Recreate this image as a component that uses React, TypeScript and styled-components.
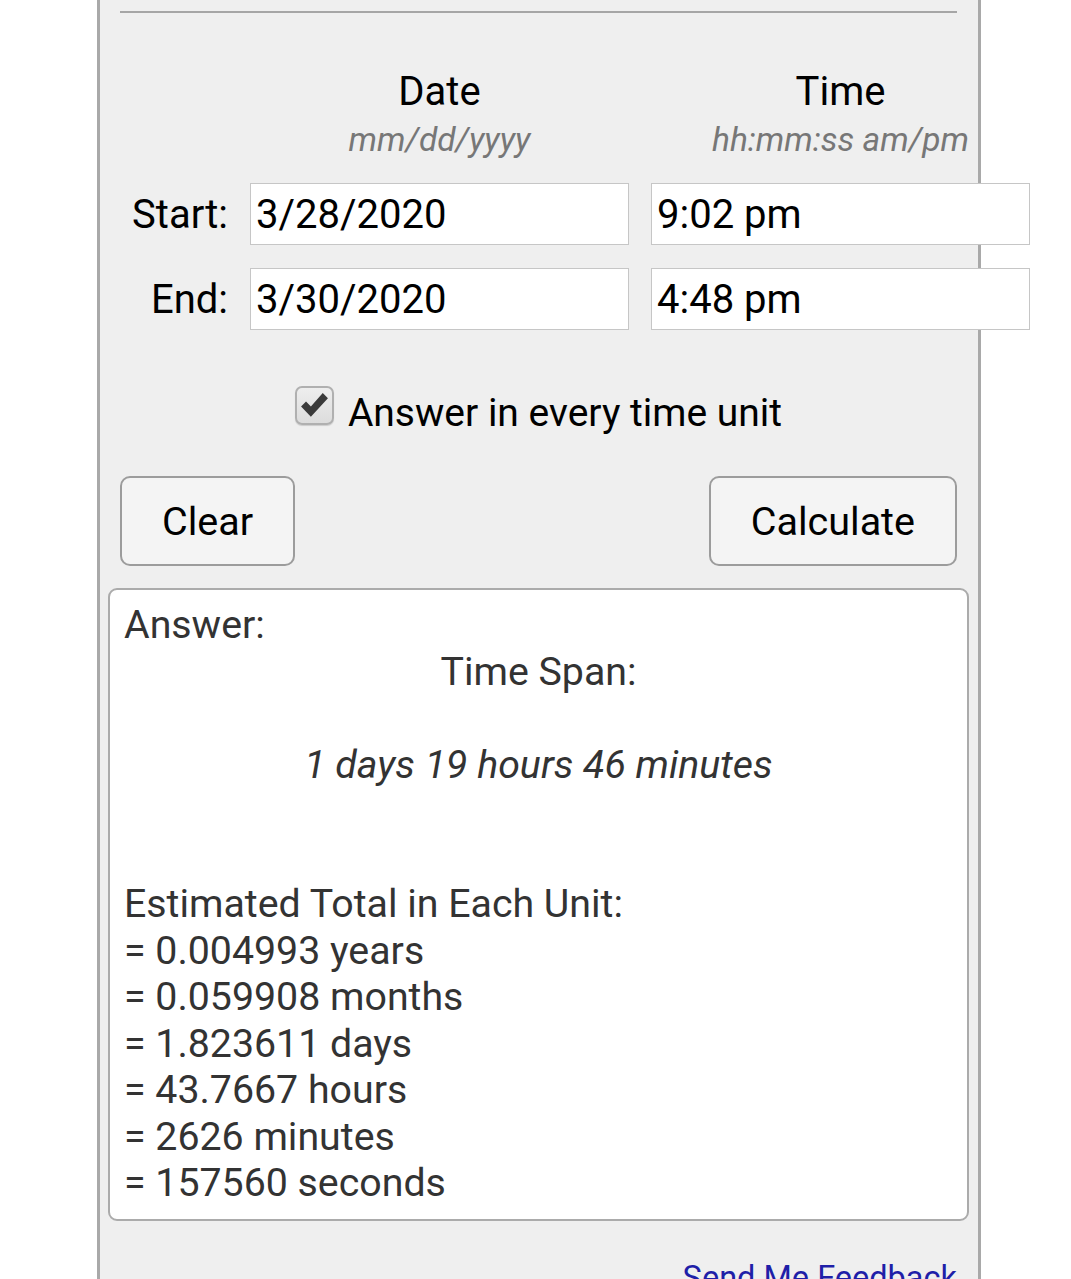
import React from "react";
import styled, { createGlobalStyle } from "styled-components";

const GlobalStyle = createGlobalStyle`
  html, body {
    margin: 0;
    padding: 0;
    background: #ffffff;
  }
  body {
    font-family: Roboto, "Noto Sans", "Liberation Sans", sans-serif;
    color: #000;
  }
`;

const Panel = styled.div`
  box-sizing: border-box;
  width: 884px;
  margin-left: 97px;
  min-height: 1279px;
  padding: 0 9px 0 8px;
  background: #efefef;
  border-left: 3px solid #a9a9a9;
  border-right: 3px solid #a9a9a9;
`;

const FormSection = styled.div`
  padding: 11px 12px 0;
`;

const Rule = styled.div`
  border-top: 2px solid #a6a6a6;
  margin-bottom: 56px;
`;

const FieldGrid = styled.div`
  display: grid;
  grid-template-columns: 108px 379px 379px;
  column-gap: 22px;
  align-items: center;
`;

const HeaderGrid = styled(FieldGrid)`
  margin-bottom: 24px;
  align-items: start;
`;

const ColumnHead = styled.div`
  text-align: center;
  white-space: nowrap;
`;

const HeadTitle = styled.div`
  font-size: 40px;
  line-height: 46px;
  margin-bottom: 6px;
`;

const HeadHint = styled.div`
  font-size: 33.5px;
  line-height: 38px;
  font-style: italic;
  color: #777;
`;

const InputRow = styled(FieldGrid)`
  margin-bottom: 23px;
`;

const RowLabel = styled.label`
  font-size: 40px;
  text-align: right;
`;

const TextInput = styled.input`
  box-sizing: border-box;
  width: 100%;
  height: 62px;
  margin: 0;
  padding: 0 5px;
  border: 1px solid #c6c6c6;
  border-radius: 0;
  background: #fff;
  font-family: Roboto, "Noto Sans", sans-serif;
  font-size: 40px;
  color: #000;
  outline: none;
`;

const CheckRow = styled.label`
  display: flex;
  justify-content: center;
  align-items: flex-start;
  gap: 14px;
  margin-top: 60px;
  font-size: 39px;
  line-height: 47px;
`;

const CheckBox = styled.span`
  box-sizing: border-box;
  display: flex;
  align-items: center;
  justify-content: center;
  width: 39px;
  height: 39px;
  margin-top: -4px;
  border: 2px solid #b0b0b0;
  border-radius: 7px;
  background: linear-gradient(#eeeeee, #dcdcdc);
  box-shadow: 0 1px 1px rgba(0, 0, 0, 0.15);
`;

const ButtonRow = styled.div`
  display: flex;
  justify-content: space-between;
  margin-top: 39px;
  margin-bottom: 22px;
`;

const ActionButton = styled.button`
  box-sizing: border-box;
  height: 90px;
  padding: 0 40px;
  border: 2px solid #9c9c9c;
  border-radius: 10px;
  background: #f4f4f4;
  font-family: Roboto, "Noto Sans", sans-serif;
  font-size: 39.5px;
  color: #000;
`;

const AnswerBox = styled.div`
  box-sizing: border-box;
  padding: 12px 14px 12px;
  background: #fff;
  border: 2px solid #ababab;
  border-radius: 9px;
  font-size: 39.3px;
  line-height: 46.5px;
  color: #333;
`;

const Line = styled.div<{ $center?: boolean; $italic?: boolean; $gap?: number }>`
  text-align: ${(p) => (p.$center ? "center" : "left")};
  font-style: ${(p) => (p.$italic ? "italic" : "normal")};
  margin-top: ${(p) => (p.$gap || 0) * 46.5}px;
  white-space: nowrap;
`;

const Footer = styled.div`
  display: flex;
  justify-content: flex-end;
  padding: 38px 12px 0;
`;

const FeedbackLink = styled.a`
  font-size: 32.5px;
  color: #1f1fa8;
  text-decoration: underline;
`;

const units = [
  "= 0.004993 years",
  "= 0.059908 months",
  "= 1.823611 days",
  "= 43.7667 hours",
  "= 2626 minutes",
  "= 157560 seconds",
];

export default function App() {
  return (
    <>
      <GlobalStyle />
      <Panel>
        <FormSection>
          <Rule />
          <HeaderGrid>
            <div />
            <ColumnHead>
              <HeadTitle>Date</HeadTitle>
              <HeadHint>mm/dd/yyyy</HeadHint>
            </ColumnHead>
            <ColumnHead>
              <HeadTitle>Time</HeadTitle>
              <HeadHint>hh:mm:ss am/pm</HeadHint>
            </ColumnHead>
          </HeaderGrid>
          <InputRow>
            <RowLabel>Start:</RowLabel>
            <TextInput defaultValue="3/28/2020" />
            <TextInput defaultValue="9:02 pm" />
          </InputRow>
          <InputRow>
            <RowLabel>End:</RowLabel>
            <TextInput defaultValue="3/30/2020" />
            <TextInput defaultValue="4:48 pm" />
          </InputRow>
          <CheckRow>
            <CheckBox>
              <svg width="31" height="31" viewBox="0 0 30 30">
                <path
                  d="M2 16 L6.8 11.2 L11.5 16 L23 3 L28 8 L11.5 26 Z"
                  fill="#3a3a3a"
                />
              </svg>
            </CheckBox>
            <span>Answer in every time unit</span>
          </CheckRow>
          <ButtonRow>
            <ActionButton type="button">Clear</ActionButton>
            <ActionButton type="button">Calculate</ActionButton>
          </ButtonRow>
        </FormSection>
        <AnswerBox>
          <Line>Answer:</Line>
          <Line $center>Time Span:</Line>
          <Line $center $italic $gap={1}>
            1 days 19 hours 46 minutes
          </Line>
          <Line $gap={2}>Estimated Total in Each Unit:</Line>
          {units.map((u) => (
            <Line key={u}>{u}</Line>
          ))}
        </AnswerBox>
        <Footer>
          <FeedbackLink href="#">Send Me Feedback</FeedbackLink>
        </Footer>
      </Panel>
    </>
  );
}
